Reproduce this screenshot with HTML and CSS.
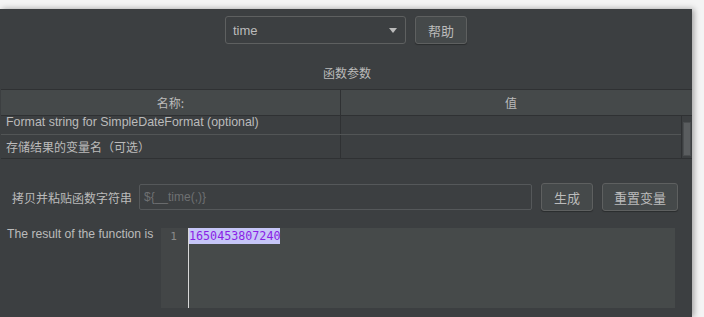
FILE: index.html
```html
<!DOCTYPE html>
<html>
<head>
<meta charset="utf-8">
<link rel="stylesheet" href="styles.css">
</head>
<body>
<div class="panel">
  <div class="toprow">
    <div class="combo"><span class="combo-text">time</span><span class="arrow"></span></div>
    <button class="btn help">帮助</button>
  </div>
  <div class="title">函数参数</div>
  <div class="table">
    <div class="thead">
      <div class="th c1">名称:</div>
      <div class="th c2">值</div>
    </div>
    <div class="tbody">
      <div class="rows">
        <div class="tr r1"><div class="td c1">Format string for SimpleDateFormat (optional)</div><div class="td c2"></div></div>
        <div class="tr r2"><div class="td c1 cjk">存储结果的变量名（可选）</div><div class="td c2"></div></div>
      </div>
      <div class="scroll"><div class="thumb"></div></div>
    </div>
  </div>
  <div class="copyrow">
    <span class="copylabel">拷贝并粘贴函数字符串</span>
    <div class="input">${__time(,)}</div>
    <button class="btn gen">生成</button>
    <button class="btn reset">重置变量</button>
  </div>
  <div class="resultrow">
    <span class="resultlabel">The result of the function is</span>
    <div class="editor">
      <div class="gutter">1</div>
      <div class="code"><span class="sel">1650453807240</span></div>
    </div>
  </div>
</div>
</body>
</html>
```

FILE: styles.css
```css
html, body {
  margin: 0;
  padding: 0;
}
body {
  width: 704px;
  height: 317px;
  background: #f4f4f4;
  overflow: hidden;
  font-family: "Liberation Sans", "Noto Sans CJK SC", sans-serif;
}
.panel {
  margin-top: 9px;
  width: 692px;
  height: 308px;
  background: #3c3f41;
  box-shadow: 2px 0 6px rgba(0,0,0,0.35);
  color: #bbbbbb;
  display: flex;
  flex-direction: column;
}
.toprow {
  display: flex;
  justify-content: center;
  gap: 9px;
  padding-top: 7px;
}
.combo {
  box-sizing: border-box;
  width: 181px;
  height: 28px;
  border: 1px solid #5e6060;
  border-radius: 3px;
  background: #3c3f41;
  display: flex;
  align-items: center;
  padding-left: 7px;
  padding-right: 8px;
}
.combo-text {
  flex: 1;
  font-size: 13px;
  color: #bbbbbb;
}
.arrow {
  width: 0;
  height: 0;
  border-left: 4px solid transparent;
  border-right: 4px solid transparent;
  border-top: 5px solid #bbbbbb;
}
.btn {
  box-sizing: border-box;
  height: 28px;
  border: 1px solid #5e6060;
  border-radius: 3px;
  background: #45494a;
  color: #bbbbbb;
  font-family: "Noto Sans CJK SC", sans-serif;
  font-size: 13px;
  padding: 0;
  box-shadow: 0 1px 1px rgba(0,0,0,0.3);
}
.help { width: 52px; }
.title {
  margin-top: 21px;
  text-align: center;
  font-family: "Noto Sans CJK SC", sans-serif;
  font-size: 12px;
  line-height: 16px;
  height: 16px;
  padding-left: 2px;
}
.table {
  margin-top: 8px;
  margin-left: 1px;
  width: 691px;
  border-top: 1px solid #2f3133;
}
.thead {
  display: flex;
  height: 25px;
  background: #45494a;
  border-bottom: 1px solid #2f3133;
}
.th {
  display: flex;
  align-items: center;
  justify-content: center;
  font-family: "Noto Sans CJK SC", sans-serif;
  font-size: 12px;
  color: #bbbbbb;
}
.c1 { width: 339px; border-right: 1px solid #2f3133; }
.thead .c2 { flex: 1; padding-right: 11px; }
.tbody {
  display: flex;
  border-bottom: 1px solid #2f3133;
}
.rows { flex: 1; }
.tr { display: flex; }
.r1 { height: 18px; border-bottom: 1px solid #525556; }
.r2 { height: 23px; }
.td {
  font-size: 12.4px;
  color: #bbbbbb;
  padding-left: 5px;
  box-sizing: border-box;
  overflow: hidden;
  white-space: nowrap;
}
.td.c1 { width: 340px; border-right: 1px solid #2f3133; }
.r1 .td.c1 { line-height: 13px; }
.r2 .td.c1 { line-height: 23px; }
.td.cjk { font-family: "Noto Sans CJK SC", sans-serif; font-size: 12px; padding-left: 5px; }
.td.c2 { flex: 1; }
.scroll {
  width: 11px;
  border-left: 1px solid #2f3133;
  display: flex;
  justify-content: center;
  padding-top: 6px;
  box-sizing: border-box;
}
.thumb {
  width: 8px;
  height: 34px;
  background: #5a5d5f;
  border: 1px solid #4a4d4f;
  box-sizing: border-box;
}
.copyrow {
  display: flex;
  align-items: center;
  margin-top: 24px;
  height: 28px;
  padding-left: 12px;
}
.copylabel {
  font-family: "Noto Sans CJK SC", sans-serif;
  font-size: 12px;
  width: 127px;
}
.input {
  box-sizing: border-box;
  width: 393px;
  height: 26px;
  border: 1px solid #55585a;
  border-radius: 2px;
  font-size: 12px;
  color: #6e7072;
  padding-left: 4px;
  line-height: 24px;
}
.gen { width: 52px; margin-left: 9px; }
.reset { width: 76px; margin-left: 9px; }
.resultrow {
  display: flex;
  margin-top: 17px;
  padding-left: 7px;
}
.resultlabel {
  font-size: 12.2px;
  width: 154px;
  line-height: 12px;
}
.editor {
  display: flex;
  width: 514px;
  height: 80px;
  background: #464a4a;
}
.gutter {
  width: 28px;
  background: #434647;
  border-right: 1px solid #d8d8d8;
  box-sizing: border-box;
  text-align: center;
  font-family: "DejaVu Sans Mono", monospace;
  font-size: 11px;
  color: #8a8a8a;
  padding-top: 2px;
  line-height: 13px;
  padding-right: 2px;
}
.code {
  flex: 1;
  font-family: "DejaVu Sans Mono", monospace;
  font-size: 11.7px;
  line-height: 16px;
}
.sel {
  background: #c6c6f7;
  color: #8a1ee6;
  display: inline-block;
  height: 16px;
}
```
